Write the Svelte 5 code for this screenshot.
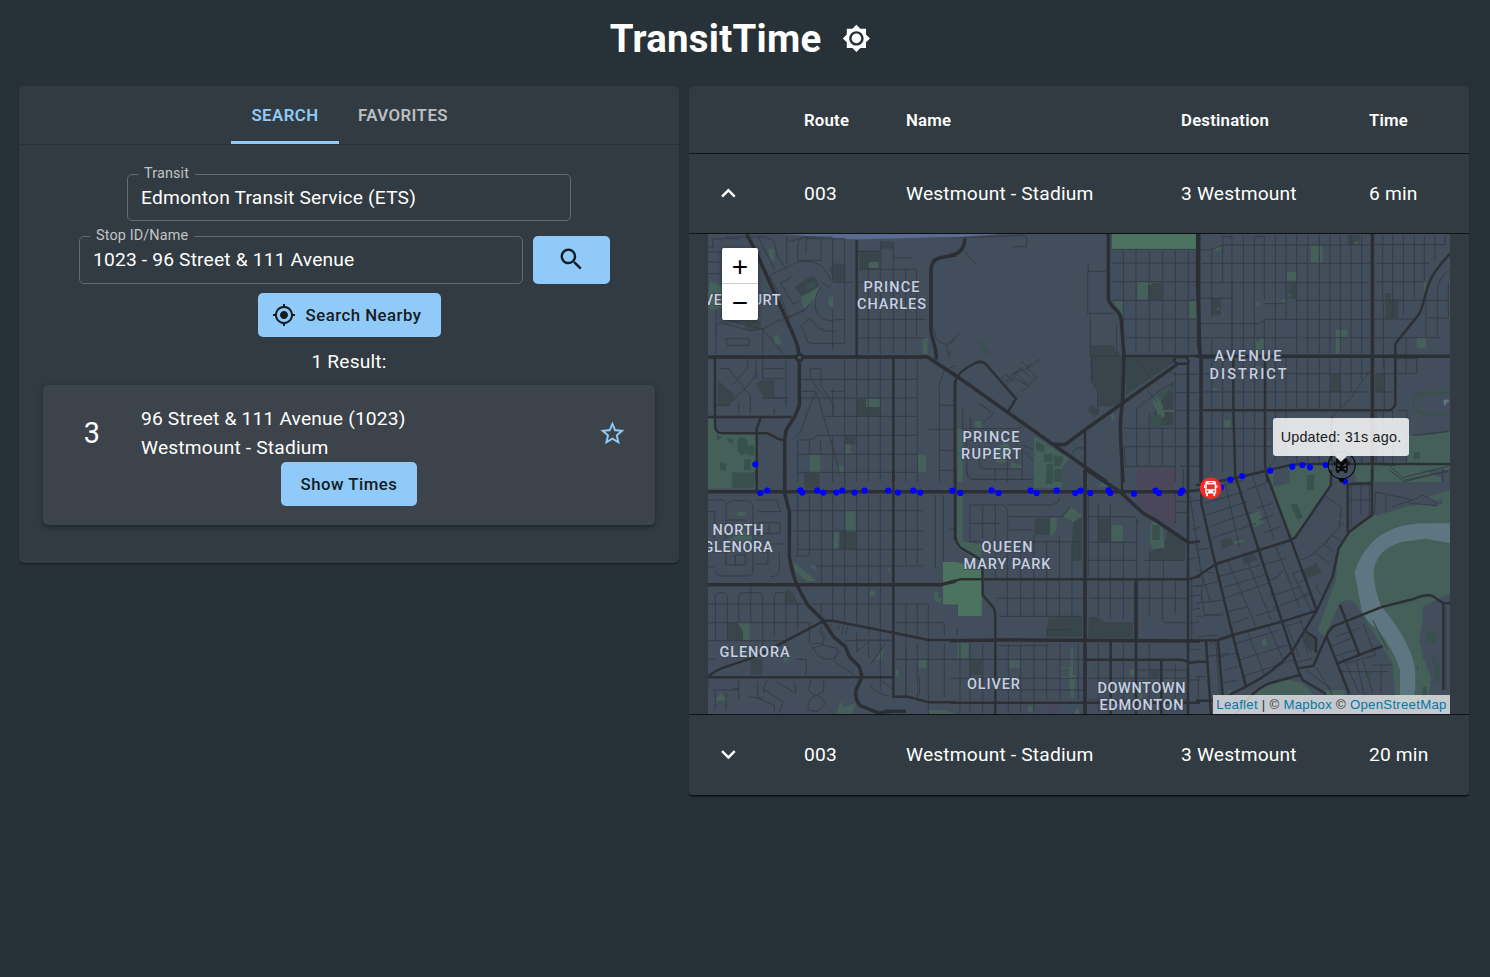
<script>
  // Each tile is drawn at three units per pixel from its own origin.
  const tiles = [
    {
      x: 706, y: 232,
      dark: 'M370 110l15-15h32v55h-30zM460 58h62v53h-62zM522 28h38v22h-38zM265 165l50-33 15 5 10 25-50 35zM118 272l45-5 3 28h-50zM150 455l15-10h40v50h-30zM36 445l50 45-15 30h-35zM453 500h70v53h-70zM418 612h30v25h-30zM295 722h45v30h-45z',
      green: 'M186 50h18v38l-10-8zM10 145l40 20v60l-30 10-14-10zM285 195l52-30 4 5-18 40-30 20zM488 90h30v18h-30zM381 190v38q-14-4-15-19 1-15 15-19zM204 315l10-8 15 30h-25zM650 318h15v48h-15zM480 500h42v25h-42zM6 560h22l5 45h117v145H6zM312 668h30v55h-30zM635 668h25v52h-25zM418 638h15v25h-15zM398 702h16v18h-20z',
      shade: 'M78 722h67v28h-67zM95 620l15-5 14 10v35l-15 10-13-10zM122 640h22v30h-22zM62 617l20 5v14l-12-3zM30 607l18 8-14 12zM40 690l22 5-4 20h-14zM114 683l20-3v34h-20zM300 158l30-10-4 16-22 12z',
      bright: '', purple: '', river: '',
      sky: 'M225 6C320 12 400 22 480 22L750 14V6z',
      minor: 'M452 58h70M525 25v85M562 30v80M562 78h60M487 112v252M523 112v630M562 112v252M599 112v252M632 120v195M458 112h170q6 0 6 8M458 150h176M458 262h200M458 318h200M487 375v375M452 375v375M599 375v375M634 375v375M416 262v70M380 90v60M383 151h60M380 230v120M288 442h346M416 375v375M380 470v80M355 553h275M285 498h349M280 624h35l20-14h300M275 625v125M310 625v40M380 610v140M344 625v40M275 667h360M275 721h360M288 478h42l-25 60-20 60-20 20M330 478l60 200 12 55M313 410h32v50l37 60v35M313 410v30l42 55M416 478h-45M245 498h-75M240 385v138M170 380v60l60 0M170 410h65M40 410h28l40 50 25 30v55M68 515l50-45 38-50M125 380v28l-45 50M150 380v60M30 520h45M98 510v36M205 530v16M170 498h70M700 460v290M750 400l-35 15-15 40M700 520h50M668 592h82M700 655h50M700 715h50M60 15h115l28 10 12 50 28 40M155 12l50 100M242 15v80M242 30l60-15M275 45q0-28 25-30h80M275 45v40h70V22M300 15v50M300 20h115M190 130l80-38q80-18 105 55M190 130l35 65 25 70M222 155l35-20M225 155l35 60 20-8M300 230l-80 38M345 150l30 20M345 165q-25 30-15 70 20 40 60 28h26M285 280l20 50q8 5 20 4h90M290 275l20-15 30 30q20 10 50 8M245 260l50-25 25-30M380 22v80M416 22v240M6 45h20M6 90h40M6 125h40M20 20h80M20 20v30M6 60h120M30 235v130M30 300q0-28 15-28l90 25 35-8v78M60 320h70v20H65zM60 262l110 30 50-30M170 290l60 75M150 270l-30-30M685 290l5 30q20 20 40 16l20-15M720 340l10 40',
      mid: 'M452 25v350M562 375v375M27 375v200C27 598 35 603 50 604H185L215 620L236 625M6 555H257M165 555L152 590V750M747 445V750',
      major: 'M122 6L150 60L265 315C275 340 278 350 280 376V520L268 550L240 595L236 625V750M6 375H665L750 432M750 68L700 78C680 85 675 95 675 120V300C680 330 692 345 691 382'
    },
    {
      x: 950, y: 232,
      dark: 'M422 340h72v20h15v10h10v153h-76v-50l-19-25zM528 376h140l10 12-150 100zM595 153h40v50h-40zM608 555l30-8 0 30 -30 10zM600 560l70-110v130h-60zM412 535l15-15 20 15-12 20z',
      green: 'M562 150h42v10h-10v43h-32zM490 208h30v50l-12-20zM715 208h23v52h-23zM75 567h20v20h-20zM22 590h16v160H22zM258 615l100 65-15 15-8 20v35h-83v-130zM140 650l25-20 25 20-20 20v22h-32zM182 690l35 10v10h-35zM612 492l15 10 12 20v12h35v5h-30v16l-20 3-5-25-12-20zM480 550l10-5 6 12-8 8z',
      shade: 'M258 628l25 12v23l-25-8zM282 665h25v25h-25zM312 670l28 5-8 28h-20zM290 695h18v55h-18zM312 710h22v40h-22zM605 548h28v33h-28zM660 465l12 8-15 10zM82 330l10-4 25 38-8 6zM625 490l22-15 8 15-22 12zM640 568l8 2-3 10z',
      bright: 'M486 6h254v46H486z',
      purple: 'M562 706h112v44H562z', river: '',
      sky: 'M0 6h150L0 18z',
      minor: 'M0 18L225 10l5 10v24h-42M45 60l33 37M0 330l32-28M0 370v-15M415 95v22M468 118h-55v126h80M421 244v128h90M500 275v98M424 373v75l19 25v75M520 55v310M558 55v310M598 55v310M638 55v310M676 55v310M715 55v310M486 52h250M486 93h252M486 149h252M486 205h252M520 261h218M526 317h212M560 382l45 58M425 445v-70M590 472l30 35M560 530v175M560 530l70-55 45-25M598 545v155M637 589v114M522 589h152M522 644h152M525 703h150M522 644l5 60M676 420v330M676 427h70M676 482h70M676 536h70M676 589h70M676 644h70M690 703h60M655 415l20 15M195 440l37 20M152 442l14-16 22 22M166 450l45-42 28 25M166 462l38-38M188 425l40-14 15-16M215 387l20 22 24 28-42 42M208 433l26 28M230 410l42-30M235 400v15M88 515l43 30-31 28M88 515l30 20M0 520h10M0 655h10M38 530v65M62 557v35M50 590v120q2 32 20 32h180M35 590h170l10-6M60 625h130M88 640v55q2 16 20 16h108v30M190 627l60 60M217 640l35 12M217 655v55M135 712v38M360 670l20-22h25M172 675v75',
      mid: 'M15 750V460Q15 430 50 408L75 393Q95 385 107 396L198 500L175 538M405 590V750M522 372H750M682 375q-20 10 0 20h30q10-10-6-20zM714 395V750',
      major: 'M475 6V200Q480 220 500 235Q515 250 515 280L522 373L518 512Q508 560 513 640L519 750M0 418L310 638L470 750M680 398L410 590L345 638L310 636M743 6V160L750 370M0 70Q42 66 45 20'
    },
    {
      x: 1196, y: 232,
      dark: 'M47 200h28v50h-28zM275 155h27v45h-27zM456 8h35v30h-35zM568 183h17v20h22v57h-39zM405 425h30v55h-30zM538 425h28v55h-28z',
      green: 'M345 40h35v52h-35zM273 120h29v25h-29zM420 293h33v22h-18v50h-15zM662 318h28v30h-28zM177 318h27v36h-27zM83 565h22v20h-22zM637 610q60 5 125-13v120l-20 8-60-10h-100l-10-25h60zM273 700h130v50H282zM475 698h180l80 40v12H480zM252 204l16-3v14zM177 212h12v8h-12zM684 150h6v24h-6zM58 48l12-6 5 12-12 6zM477 27l10 2v6h-12zM178 402h22v8h-22zM50 468h14v6h-14zM500 430l10-2-3 10zM60 228l10-2v10zM214 632l8-2v8h-8z',
      shade: 'M275 158h10v14h-10zM275 182h10v15h-10zM653 660h18v22h-18zM180 316h10v12h-10zM335 732h18v18h-18z',
      bright: '', purple: '', river: 'M742 505l15-3 3 6-9 4v6l-6 4z', sky: '',
      minor: 'M15 53h30l35-14h440M80 10v140M80 14h28v350M142 14v260M175 14v260M175 14h30v190M238 10v354M270 10v250M302 10v354M335 10v354M370 10v354M402 10v354M433 10v354M465 10v354M497 10v354M18 94h505M15 152h505M15 199h93M108 152v212M15 275h175l18-13h315M205 215h60M302 205h220M15 317h290M320 317h202M47 54v200M47 320v45M142 275v90M176 275v90M205 262v102M535 38h212M540 94h160M560 10v200M590 10v250M622 10v240M655 10v190M685 10v140M717 10v80M747 10v30M540 149h140M535 205h225M535 261h120M535 317h200M762 110q-40 35-38 70v135M757 150v108h-65M690 205v110M562 210v200M630 318v105M602 424h60v-45M602 380h60M12 380h90M47 380v150M80 380v150M142 380v150M176 380v150M238 380v150M270 380v150M302 380v150M335 380v150M370 380v150M402 380v150M433 380v150M465 380v100M497 380v60M18 425h90M18 480h90M112 425h410M112 480h410M407 555l60-60 53-78M540 425h60M540 480h60M565 380v150M18 590h210M18 643h210M47 540v180M80 540v180M142 540v180M176 540v180M238 540v140l-30 40M270 540v140M302 670v30M335 670v20M370 670v30M465 670v20M497 675v20M540 535v160M562 535v160M590 535v160M602 535h30v160M540 590h95M540 643h95M650 610l110-12M570 692l50 45 140-35M740 710v40M560 700h40',
      mid: 'M112 375V530L118 740L125 750M207 375V700L215 750M20 535H585L598 518V335L670 245C685 215 688 175 705 140Q720 110 762 65M407 555V690M0 760L120 738L270 702L310 696L762 696M529 540V750',
      major: 'M8 6V340L15 380V750M0 373H762M529 6V696',
      field: 'M685 483h77M762 546h-77q-32-2-33-32 1-31 33-31'
    },
    {
      x: 706, y: 470,
      dark: 'M295 10h45v46h-45zM400 183h52v55h-52zM238 355l22 12 15 32h-40zM63 458h40l10 20v32h-50zM134 565h35v50h-35z',
      green: 'M6 0h144v56H6zM95 125h22v14H95zM418 123h31v63h-31zM385 186h15v22l-3 28h-15zM262 275l22 18 48 40h-30l-35-30zM310 288h18v15zM491 362h16v15h-16zM95 458h36v52h-20v-25zM90 195l15-20 20 15 20 15-10 8h-75zM638 570h24v25h-24zM568 600l10-2v22h-10zM683 365h14v15l8 6v12h-10l-12-14zM230 568l10-8 10 8-10 10zM510 568l25-38-8 38zM30 686l15-16 17 16v6H30zM400 700h12v10l40-10-15 32h-45zM667 720h50l33 12h-83zM546 295h8v7h-8zM630 645h5v25h-5z',
      shade: 'M78 8h67v46H78z',
      bright: 'M711 276h40v127h-40z', purple: '', river: '', sky: '',
      minor: 'M275 75v180M310 75v185M346 75v270M380 75v270M416 10v390M452 75v385M488 75v420M523 75v435M599 75v210M634 75v210M688 75v220M712 75v200M245 122h405M260 183h390M275 238h375M330 288h320M488 75M265 258l40 0M6 90h45l10 12 20-10h40q18 2 20 18v190q0 18-18 18H50q-18 0-20-15M6 125h20v80M60 105v180h58v-35M60 150h60M90 255h30M152 90h60l12 35h-68M152 158h70v32h-70M190 190v-30M220 250v50q-2 20-25 20M186 220v62h-36M150 222h90M6 290h20M88 255v30M28 510v-130q0-12 12-12h12q12 0 12 12v130M98 455v-75q0-12 12-12h48q12 0 12 12v150M134 350v108M205 500v-120q0-12 12-12h20M6 402h290M6 458h310M6 512h230M240 370v180M275 400v80M320 402h347v330M380 350v100M416 400v55M452 400v60M345 400v50M523 400v60M600 400v280M634 400v110M715 460v40M570 458h145M375 460l-10 30M400 465l-5 15M412 465l-5 30M425 468l-6 25M452 545l38-32M452 545v-60M455 510h100M540 520l-48 65M523 510v150M570 568h180M488 515v50M418 512h140M600 540v140M634 520v170M715 520v160M345 470l10 30-5 25-30 10M310 460v60l30 40q30 15 50 0l15-20M350 525l45 10M395 535l-10 40 60 40M340 480l16 35M320 520h30M270 568h30q5 20-2 50M315 630l-8 30 20 20 25-15 2-35M307 720q-5-30 20-45 30 5 28 30l-20 20zM6 568h20M6 660v-30M20 660h80M28 720v-60M98 630v60M60 720v-50M185 630q-15 20-10 40M210 635l60 35-5-35M155 635v50l50 20v20M170 655l60 40-10 35M170 685l-40-5M80 655h20M490 640q15 30 60 38M455 700q50 40 100 30M523 630l40 30M640 620v55M562 568v50M245 530v30',
      mid: 'M152 0v64M0 622H562M8 620Q20 605 55 592L150 560L355 452H380L562 488L668 510H750M562 0V680H605L668 697H750M747 0v210',
      major: 'M236 0V70L250 125V260Q258 310 275 350L305 405L350 450L382 500L418 530L430 560L460 590L468 620L450 660Q445 690 465 708L520 730L540 724H600M0 65H750M6 344H705L750 333'
    },
    {
      x: 950, y: 470,
      dark: 'M445 143h36v74h-36zM600 245l30-12 20-30v-30l55 45v53H600zM253 145h48v50h-48zM370 155l25-10v127h-28v-80zM296 442h100v60H292v-30zM415 442h30l20 15h84v47H415zM60 570h35v45H60zM602 598h26v25h-26z',
      green: 'M22 0h16v30l-16 5v30h16v150l56 7v48l-30-10-45-32zM252 0h83v53h-83zM302 143h20l-3 35-6 18h-14zM363 112l33 24-25 20-30-15zM484 166h35v47h-35zM604 155l25-2 10 30 5 50-35 5-10-25zM22 518h34v47H22zM178 570h32v24h-32zM362 536h7v80h8v10l-5 55-8 5-6-40v-22h-30v-4h30v-25h-28v-4h32zM233 708h16v18h-16zM445 50l15-25 25 25zM645 628h22v8h-22zM565 665l12-3v30h-12zM375 718h12v14h-12zM540 598h14v18h-14z',
      shade: 'M288 0h20v42h-20zM312 0h22v32h-22zM607 165h22v45h-22zM430 590h10v12h-10z',
      bright: 'M0 276h20l75 22V438H24v-35H0z',
      purple: 'M562 0h112v175l-80-45-32-35zM292 706h34v26h-34z', river: '', sky: '',
      minor: 'M50 0v10q4 18 20 18h170M60 105h95q15 0 18 20v90M60 105v110h120M60 160h90M170 105h130q25-2 28-20M98 105v100M136 105v110M178 140h160l20-30M178 180h70M178 215h210M136 215v110M172 225v100M212 225v100M252 195v130M290 215v110M328 195v130M366 215v110M415 80v240M445 100v225M481 100v225M520 215v110M560 150v175M598 240v85M640 270v55M418 140h130q15 0 15 20M418 217h140M418 271h145M580 271h125M676 60v100M676 95h38M676 128h38M172 330v108M212 330v108M252 330v108M290 330v108M328 330v108M366 330v108M445 330v108M481 330v120M520 330v120M598 330v108M637 330v120q2 8 15 8h55M676 330v100M140 385h260M418 385h295M150 439h250M425 438l20 18M292 500v-20h70l5-10M145 527h150M22 495v-20M30 520v210M60 520v210M98 520v210M175 520v210M212 520v210M252 520v210M290 520v170M330 520v170M385 520v170M0 568h400M0 625h400M145 660h255M445 520v210M520 520v210M598 520v210M676 580v140M415 625h295M562 600h150M415 690h300M720 80l30 200M720 95l30-5M725 180l25-8M725 330v180M720 350l30-4M720 380l30-6M720 420l30-5M720 460l30-5M720 540l30-3M720 630h30M745 620v80M715 270l35-10M0 175h15M700 0v55',
      mid: 'M16 0V200Q20 225 35 235L95 270Q98 280 98 375L130 412Q136 420 136 450V732M482 515V732M558 330V732M634 570V732M405 569H695L720 578L750 575M0 698H750M516 0V62M714 0V732M0 337L30 328H715L750 318M716 64L750 60M716 218L750 214',
      major: 'M405 0V732M0 65H716M410 0L510 65L580 130Q620 150 660 180L716 218M0 512L160 510L750 513M558 335V520'
    },
    {
      x: 1196, y: 470,
      dark: 'M75 210l30-8 8 22-35 12zM140 262l35-12 8 20-40 14zM322 300l40-22 15 30-45 18zM318 515l20-30 22 15v45l-25-12zM655 412h20v35h-20zM678 405h57v42h-57z',
      green: 'M210 0h195V50L290 205L275 190zM440 55l40 0-20 10zM420 145l25 15 5-20zM430 220L465 185L530 135L762 60V650H720L690 700H600L590 590L525 480L470 440V395Q445 385 430 405L410 445L385 500L365 480L380 440L420 330zM160 135l30-12 14 35-32 15zM175 675Q200 640 270 628L320 640L355 675zM470 605l68-10 4 35-40 12-25-5zM385 660h60v15h-60zM113 215l28-8 2 8-28 8zM198 508l10-4 5 24h-14zM95 660h12v10H95z',
      shade: 'M333 15h22l-2 45h-20zM284 105l18-5 18 42-15 8zM690 482l28 4v40l-28-10zM715 580h15v55h-15zM708 560h10v22h-10zM680 650h12v32h-12zM510 606l14-3v20h-14z',
      bright: '', purple: '',
      land: 'M235 0H280V40L230 50zM535 60L650 88L680 75L720 95L735 85L740 100L715 110L680 103L640 108L540 137zM440 60L528 30V130L460 190L430 230zM430 400Q450 385 475 395L590 580L585 675H460L400 480L420 440zM670 505L680 455V410L762 370V675H700L705 620L680 560zM670 0L762 25V0z',
      river: 'M762 160H690Q590 160 530 215Q490 255 476 308L498 425Q515 455 540 475Q590 530 612 600V675H655Q665 600 645 550Q610 470 560 415Q545 395 533 320Q530 240 620 215L690 206L762 220z', sky: '',
      minor: 'M30 60l110-30M25 100l120-35M30 135l125-40M40 170l130-45M45 205l135-45M85 30l45 200M170 20l65 190M180 115l50-15M190 150l40-15M150 60l60-20M200 190l55-20M65 320l130-35M75 355l130-40M85 385l130-45M95 425l60-15M110 460l50-18M95 270l85 200M145 250l80 200M240 230l70 180M200 285l70-20M210 320l15 10 20-10 20-25M230 415l110-40M220 380l90-30M180 437l70-20M290 310l65 130M290 310l35-12M300 340l35-12M310 380l40-15M120 520l130-40M130 570l145-45M140 620l150-50M155 485l50 130M215 465l50 110M270 460l40 100M310 440l35 110M260 470l60-15M290 580l60-15M0 240l40-5M0 300l55 10M0 350l70-15M0 400l80-10M0 440l85-10M0 220l20 110-5 60M20 320l25 80M40 520l70-20M30 560l70-10M75 560l45-10M85 600l40-10M75 640l50-10M60 520l10 150M5 500l60-5M0 620h30M310 270q30-5 60-35l70-75M390 80l45 30-5 60M385 230l20-35 35 20M385 225l30 20M360 250l40 30M375 375l-15-25 8-4M465 40v130M495 45v90M460 90h70M460 45h60v95M540 65l-5 70M570 75v50M650 90l-60 20M535 65l115 25 30-15 42 22v10l-45-4-40-5M405 530l60-25M420 500l70-25M410 560l70-20M450 580l90-25M500 460l40 100M530 450l45 90M430 605h150M440 560l50 110M500 570l30 100M360 590l50 85M330 600l80 60M480 570l25 105M555 590v80M590 585h-60M665 600v-10M750 410v250M320 490l15 60M15 365l10 68 60 5M580 0l45 35 137-35M625 30l130-25',
      mid: 'M0 60h16M16 0V100L60 290L110 495L150 650M120 25L188 240L258 455L310 610L320 630L390 672M207 0L285 210L362 420M0 322L60 282L190 240L285 210L298 202L405 45V0M0 575H35M66 512L80 675M30 512L45 732M0 692H50M0 512L65 510L110 495L258 455L362 422M432 405L490 555M425 580L560 528M330 485L360 505V548M392 500L460 672M308 595L352 588L395 490L410 470L560 410L650 388Q690 370 710 378L742 400M742 400V660M762 400H742M100 675L150 650Q230 610 288 545L362 422L410 320L428 235L460 185L528 135V0M455 185V45Q458 40 528 40M120 732Q170 660 220 640L312 615',
      major: ''
    }
  ];

  const layers = [
    ['dark', '#38464b'],
    ['green', '#446059'],
    ['bright', '#4c735f'],
    ['purple', '#4b475b'],
    ['land', '#424e5c'],
    ['shade', '#38504e'],
    ['river', '#5e7682'],
    ['sky', '#596b91']
  ];

  const roads = [
    ['minor', '#343b44', 2.8],
    ['mid', '#2c3035', 7.5],
    ['major', '#2b2e32', 10.5]
  ];

  const labels = [
    ['DOVERCOURT', 732, 305, 97],
    ['PRINCE', 891.5, 292, 56],
    ['CHARLES', 891.5, 309, 69],
    ['AVENUE', 1248, 361, 67],
    ['DISTRICT', 1248, 378.5, 77],
    ['PRINCE', 991, 442, 57],
    ['RUPERT', 991, 459, 60],
    ['NORTH', 738, 534.5, 51],
    ['GLENORA', 738, 552, 69],
    ['QUEEN', 1007, 552, 51],
    ['MARY PARK', 1007, 569, 87],
    ['GLENORA', 754.5, 657, 70],
    ['OLIVER', 993.5, 689, 53],
    ['DOWNTOWN', 1141.5, 693, 88],
    ['EDMONTON', 1141.5, 710, 84]
  ];

  const stops = [
    [755.3, 464.3], [760.3, 493], [767.3, 490.5], [800.3, 490.3], [802.3, 492.6], [817.3, 490.5], [823.3, 492.6],
    [836.3, 492.6], [842.3, 490.5], [854.6, 492.6], [864.6, 490.5], [888.3, 490.5], [898, 492.6], [913.3, 490.5],
    [920.3, 492.6], [952.3, 490.6], [960.3, 493], [991.6, 490.3], [998.6, 493], [1030.6, 490.6], [1036.6, 493],
    [1056.6, 490.6], [1075.3, 493], [1080.6, 490.6], [1090.3, 493], [1108.6, 490.4], [1110.3, 493], [1134, 493.7],
    [1155.6, 490.6], [1159, 493], [1180.6, 493], [1182.3, 490.6], [1221, 487.3], [1230.3, 479.7], [1242.3, 476],
    [1270.3, 470.7], [1292.3, 466.7], [1302.3, 465], [1310, 467.3], [1325.7, 465], [1345, 481.3]
  ];
</script>

{#snippet row(open, time)}
  <div class="row">
    <span class="toggle">
      <svg viewBox="0 0 24 24" width="28.8" height="28.8" fill="#fff">
        {#if open}
          <path d="M7.41 15.41L12 10.83l4.59 4.58L18 14l-6-6-6 6z" />
        {:else}
          <path d="M7.41 8.59L12 13.17l4.59-4.58L18 10l-6 6-6-6z" />
        {/if}
      </svg>
    </span>
    <span>003</span><span>Westmount - Stadium</span><span>3 Westmount</span><span>{time}</span>
  </div>
{/snippet}

<div class="page">
  <header>
    <h1>TransitTime</h1>
    <svg viewBox="0 0 24 24" width="28.8" height="28.8" fill="#fff">
      <path d="M20 15.31L23.31 12 20 8.69V4h-4.69L12 .69 8.69 4H4v4.69L.69 12 4 15.31V20h4.69L12 23.31 15.31 20H20v-4.69zM12 18c-3.31 0-6-2.69-6-6s2.69-6 6-6 6 2.69 6 6-2.69 6-6 6zM12 8a4 4 0 1 0 0 8 4 4 0 0 0 0-8z" />
    </svg>
  </header>

  <main>
    <section class="paper search">
      <nav>
        <button class="tab active">SEARCH</button>
        <button class="tab">FAVORITES</button>
      </nav>
      <div class="form">
        <fieldset class="transit">
          <legend>Transit</legend>
          <div>Edmonton Transit Service (ETS)</div>
        </fieldset>
        <div class="stopline">
          <fieldset class="stop">
            <legend>Stop ID/Name</legend>
            <div>1023 - 96 Street &amp; 111 Avenue</div>
          </fieldset>
          <button class="btn find" aria-label="Search">
            <svg viewBox="0 0 24 24" width="28.8" height="28.8" fill="#151c22">
              <path d="M15.5 14h-.79l-.28-.27C15.41 12.59 16 11.11 16 9.5 16 5.91 13.09 3 9.5 3S3 5.91 3 9.5 5.91 16 9.5 16c1.61 0 3.09-.59 4.23-1.57l.27.28v.79l5 4.99L20.49 19l-4.99-5zm-6 0C7.01 14 5 11.99 5 9.5S7.01 5 9.5 5 14 7.01 14 9.5 11.99 14 9.5 14z" />
            </svg>
          </button>
        </div>
        <button class="btn nearby">
          <svg viewBox="0 0 24 24" width="24" height="24" fill="#151c22">
            <path d="M12 8c-2.21 0-4 1.79-4 4s1.79 4 4 4 4-1.79 4-4-1.79-4-4-4zm8.94 3c-.46-4.17-3.77-7.48-7.94-7.94V1h-2v2.06C6.83 3.52 3.52 6.83 3.06 11H1v2h2.06c.46 4.17 3.77 7.48 7.94 7.94V23h2v-2.06c4.17-.46 7.48-3.77 7.94-7.94H23v-2h-2.06zM12 19c-3.87 0-7-3.13-7-7s3.13-7 7-7 7 3.13 7 7-3.13 7-7 7z" />
          </svg>
          <span>Search Nearby</span>
        </button>
        <p>1 Result:</p>
        <article>
          <div class="info">
            <span class="num">3</span>
            <div class="desc">96 Street &amp; 111 Avenue (1023)<br />Westmount - Stadium</div>
            <svg viewBox="0 0 24 24" width="28.8" height="28.8" fill="#90caf9">
              <path d="M22 9.24l-7.19-.62L12 2 9.19 8.63 2 9.24l5.46 4.73L5.82 21 12 17.27 18.18 21l-1.63-7.03L22 9.24zM12 15.4l-3.76 2.27 1-4.28-3.32-2.88 4.38-.38L12 6.1l1.71 4.04 4.38.38-3.32 2.88 1 4.28L12 15.4z" />
            </svg>
          </div>
          <button class="btn times">Show Times</button>
        </article>
      </div>
    </section>

    <section class="paper table">
      <div class="row head">
        <span></span><span>Route</span><span>Name</span><span>Destination</span><span>Time</span>
      </div>
      {@render row(true, '6 min')}
      <div class="mapcell">
        <div class="map">
          <svg class="canvas" viewBox="708 234 742 480" width="742" height="480">
            {#each layers as [key, color]}
              {#each tiles as t}
                {#if t[key]}
                  <path d={t[key]} fill={color} transform="translate({t.x} {t.y}) scale(.33333)" />
                {/if}
              {/each}
            {/each}
            <path d={tiles[2].field} fill="none" stroke="#385149" stroke-width="7" transform="translate(1196 232) scale(.33333)" />
            {#each roads as [key, color, width]}
              {#each tiles as t}
                {#if t[key]}
                  <path d={t[key]} fill="none" stroke={color} stroke-width={width} stroke-linejoin="round" transform="translate({t.x} {t.y}) scale(.33333)" />
                {/if}
              {/each}
            {/each}
            <circle cx="799.5" cy="357.5" r="4.5" fill="#2b2e32" />
            <circle cx="799.5" cy="357.5" r="1.7" fill="#4a525d" />
            <g class="labels">
              {#each labels as [text, x, y, w]}
                <text {x} {y} textLength={w}>{text}</text>
              {/each}
            </g>
            {#each stops as [x, y]}
              <circle cx={x} cy={y} r="3.1" fill="#00f" />
            {/each}
            <g transform="translate(1210.7 488.2)">
              <circle r="10.8" fill="#ee2e24" />
              <path d="M-3.5-7.3h7q2 0 2 2V5.4h-1v1.8q0 .8-.9.8t-.9-.8V5.4h-5.4v1.8q0 .8-.9.8t-.9-.8V5.4h-1V-5.3q0-2 2-2z" fill="#fff" />
              <path d="M-6.2-3.2v3M6.2-3.2v3" stroke="#fff" stroke-width="1" />
              <path d="M-2.2-5.7h4.4" stroke="#ee2e24" stroke-width=".8" />
              <path d="M-4-3.8h8v4.8h-8z" fill="#ee2e24" />
              <circle cx="-3.2" cy="3.3" r="1" fill="#ee2e24" /><circle cx="3.2" cy="3.3" r="1" fill="#ee2e24" />
            </g>
            <g transform="translate(1341.7 465.3)">
              <circle r="13.5" fill="none" stroke="#080a0c" stroke-width="1.1" />
              <path d="M-3.5 12.8h7L1.5 17h-3z" fill="#050607" />
              <path d="M-4.5-6.8h9q1.5 0 1.5 2V6h-1v1.8h-2.3V6h-5.4v1.8H-5V6h-1V-4.8q0-2 1.5-2z" fill="#080a0c" />
              <path d="M-7.2-4v4M7.2-4v4" stroke="#080a0c" stroke-width="1.1" />
              <path d="M-4.3-2.6L-.8 1h-3.5zM4.3-2.6V1H.8z" fill="#3e4a57" />
              <circle cx="-3.6" cy="3.6" r=".9" fill="#66717d" /><circle cx="3.6" cy="3.6" r=".9" fill="#66717d" />
            </g>
          </svg>
          <div class="zoom"><span>+</span><span>−</span></div>
          <div class="tip">Updated: 31s ago.</div>
          <div class="attr"><a href="#leaflet">Leaflet</a> | © <a href="#mapbox">Mapbox</a> © <a href="#osm">OpenStreetMap</a></div>
        </div>
      </div>
      {@render row(false, '20 min')}
    </section>
  </main>
</div>

<style>
  :global(body) { background: #263238; }
  .page {
    box-sizing: border-box;
    min-height: 977px;
    font-family: Roboto, sans-serif;
    font-size: 19.2px;
    letter-spacing: .18px;
    color: #fff;
  }
  header {
    height: 86px;
    box-sizing: border-box;
    padding: 0 10px 10px 0;
    display: flex;
    justify-content: center;
    align-items: center;
    gap: 20px;
  }
  h1 { margin: 0; font-size: 38.4px; font-weight: 700; line-height: 45px; letter-spacing: .27px; }
  main { display: flex; align-items: flex-start; gap: 10px; padding: 0 21px 0 19px; }
  .paper {
    background: #313b41;
    border-radius: 5px;
    box-shadow: 0 2px 1px -1px rgba(0,0,0,.2), 0 1px 1px rgba(0,0,0,.14), 0 1px 3px rgba(0,0,0,.12);
  }
  .search { width: 660px; height: 477px; }
  nav { display: flex; justify-content: center; height: 58px; border-bottom: 1px solid #263238; }
  button { font-family: inherit; border: 0; margin: 0; padding: 0; }
  .tab {
    background: none;
    color: #bcbfc1;
    font-size: 16.8px;
    font-weight: 600;
    letter-spacing: .46px;
    width: 108px;
    border-bottom: 3px solid transparent;
    border-top: 3px solid transparent;
  }
  .tab:last-child { width: 128px; }
  .active { color: #90caf9; border-bottom-color: #90caf9; }
  .form { display: flex; flex-direction: column; align-items: center; }
  fieldset {
    box-sizing: border-box;
    width: 444px;
    margin: 0;
    border: 1px solid #646b70;
    border-radius: 5px;
    padding: 0 13px;
    min-width: 0;
  }
  legend {
    font-size: 14.4px;
    line-height: 16px;
    padding: 0 6px;
    margin-left: -3px;
    color: #c1c4c6;
    letter-spacing: .135px;
  }
  fieldset div { line-height: 24px; margin-top: 4px; }
  .transit { height: 55px; margin-top: 21px; }
  .stopline { display: flex; gap: 10px; align-items: flex-end; margin-top: 7px; margin-right: 9px; }
  .stop { height: 56px; }
  .btn {
    background: #90caf9;
    border-radius: 5px;
    color: #151c22;
    font-size: 16.8px;
    font-weight: 500;
    letter-spacing: .48px;
    display: flex;
    align-items: center;
    justify-content: center;
  }
  .find { box-sizing: border-box; width: 77px; height: 48px; padding-bottom: 2px; }
  .nearby { width: 183px; height: 44px; margin-top: 9px; gap: 10px; padding-right: 5px; }
  p { margin: 10px 0 9px; line-height: 29px; }
  article {
    width: 612px;
    height: 140px;
    box-sizing: border-box;
    padding-top: 19px;
    background: #3d434a;
    border-radius: 5px;
    box-shadow: 0 3px 3px -2px rgba(0,0,0,.2), 0 3px 4px rgba(0,0,0,.14), 0 1px 8px rgba(0,0,0,.12);
    display: flex;
    flex-direction: column;
    align-items: center;
  }
  .info { display: grid; grid-template-columns: 98px 1fr 57px; align-items: center; width: 100%; height: 58px; }
  .num { font-size: 28.8px; text-align: center; }
  .desc { line-height: 29px; }
  .times { width: 136px; height: 44px; }
  .table { width: 780px; }
  .row {
    display: grid;
    grid-template-columns: 115px 102px 275px 188px 1fr;
    align-items: center;
    height: 79px;
    border-bottom: 1px solid #0d1317;
  }
  .row:last-child { height: 79px; padding-bottom: 1px; }
  .head { height: 67px; font-size: 16.8px; font-weight: 600; letter-spacing: .2px; }
  .toggle { display: flex; padding-left: 25px; }
  .mapcell { padding: 0 19px; border-bottom: 1px solid #0d1317; }
  .map { position: relative; width: 742px; height: 480px; background: #424e5c; overflow: hidden; }
  .canvas { display: block; }
  .labels { font-family: Roboto, sans-serif; font-size: 14.5px; font-weight: 500; letter-spacing: 0; fill: #c6d0e2; text-anchor: middle; paint-order: stroke; stroke: #3c4551; stroke-width: 1.5px; }
  .zoom {
    position: absolute;
    left: 14px;
    top: 14px;
    width: 36px;
    height: 72px;
    background: #fff;
    border-radius: 2px;
    color: #000;
    font: 28px/35px "Liberation Sans", sans-serif;
    text-align: center;
    box-shadow: 0 1px 4px rgba(0,0,0,.4);
  }
  .zoom span { display: block; height: 36px; box-sizing: border-box; line-height: 37px; }
  .zoom span:first-child { border-bottom: 1px solid #ccc; }
  .tip {
    position: absolute;
    left: 565px;
    top: 184px;
    width: 136px;
    height: 38px;
    border-radius: 3px;
    background: #fff;
    opacity: .83;
    color: #111;
    font: 14.4px/38px "Liberation Sans", sans-serif;
    text-align: center;
    white-space: nowrap;
  }
  .tip::after {
    content: "";
    position: absolute;
    left: 62px;
    top: 38px;
    border: 6px solid transparent;
    border-top-color: #fff;
    border-bottom: 0;
  }
  .attr {
    position: absolute;
    right: 0;
    bottom: 0;
    width: 237px;
    height: 19px;
    background: rgba(255,255,255,.7);
    color: #333;
    font: 13.2px/19px "Liberation Sans", sans-serif;
    letter-spacing: .28px;
    text-align: center;
    white-space: nowrap;
  }
  .attr a { color: #0078a8; text-decoration: none; }
</style>
